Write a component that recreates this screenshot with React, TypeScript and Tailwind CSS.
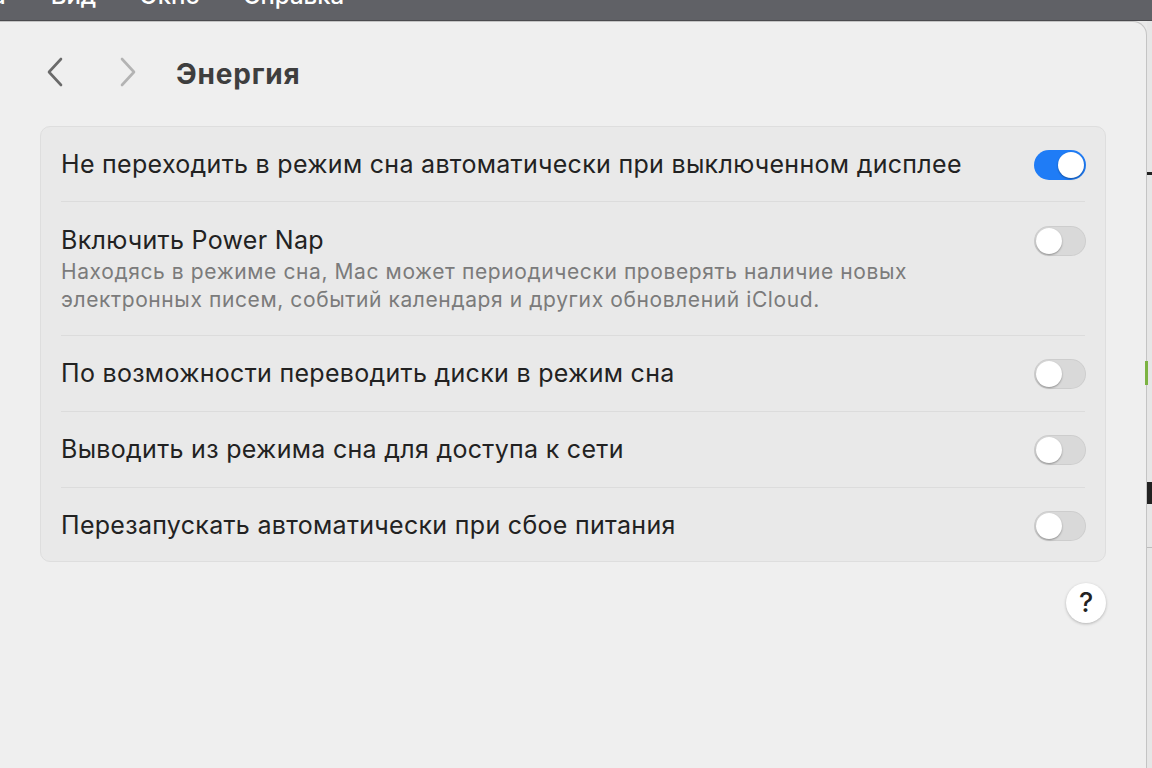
import React from "react";

const Toggle = ({ on }: { on?: boolean }) => {
  return (
    <div
      className={`relative w-[52px] h-[30px] rounded-full shrink-0 ${
        on ? "bg-[#1f7cf6]" : "bg-[#d9d9d9] shadow-[inset_0_0_0_1px_rgba(0,0,0,0.05)]"
      }`}
    >
      <div
        className={`absolute top-[2px] w-[26px] h-[26px] rounded-full bg-white shadow-[0_1px_2px_rgba(0,0,0,0.35)] ${
          on ? "left-[24px]" : "left-[2px]"
        }`}
      />
    </div>
  );
};

const Row = ({
  title,
  desc,
  on,
  first,
  last,
}: {
  title: string;
  desc?: string[];
  on?: boolean;
  first?: boolean;
  last?: boolean;
}) => {
  return (
    <div className={first ? "" : "border-t border-[#dcdcdc]"}>
      <div
        className={`flex justify-between gap-4 ${
          desc
            ? "items-start pt-[23px] pb-[21px]"
            : first
            ? "items-center pt-[22px] pb-[21px]"
            : last
            ? "items-center pt-[22px] pb-[20px]"
            : "items-center py-[22px]"
        }`}
      >
        <div className="flex flex-col">
          <span className="text-[25px] leading-[31px] tracking-[0.3px] text-[#222222]">{title}</span>
          {desc && (
            <div className="mt-[2px] text-[21px] leading-[28px] tracking-[0.6px] text-[#7b7b7b]">
              {desc.map((d) => (
                <div key={d}>{d}</div>
              ))}
            </div>
          )}
        </div>
        <div className={desc ? "pt-[1px] mr-[-1px]" : "mr-[-1px]"}>
          <Toggle on={on} />
        </div>
      </div>
    </div>
  );
};

export default function App() {
  return (
    <div
      className="w-[1152px] h-[768px] overflow-hidden bg-[#e9e9e9] flex flex-col"
      style={{ fontFamily: "Inter, 'Liberation Sans', sans-serif" }}
    >
      {/* menu bar */}
      <div className="h-[21px] bg-[#606166] overflow-hidden shrink-0 border-b border-[#4a4a4e]">
        <div className="flex text-white text-[24px] leading-[24px] mt-[-16px] font-medium">
          <span className="ml-[-8px]">а</span>
          <span className="ml-[45px]">Вид</span>
          <span className="ml-[43px]">Окно</span>
          <span className="ml-[43px]">Справка</span>
        </div>
      </div>

      <div className="flex flex-1">
        {/* window */}
        <div className="w-[1147px] bg-[#efefef] rounded-tr-[14px] border-r border-t border-[#c4c4c4] pl-[40px] pr-[40px] flex flex-col">
          {/* header */}
          <div className="h-[104px] flex items-center pb-[4px]">
            <svg width="20" height="32" viewBox="0 0 20 32" className="ml-[5px]">
              <path d="M16 3 L4 16 L16 29" fill="none" stroke="#6a6a6a" strokeWidth="2.6" strokeLinecap="round" strokeLinejoin="round" />
            </svg>
            <svg width="20" height="32" viewBox="0 0 20 32" className="ml-[53px]">
              <path d="M4 3 L16 16 L4 29" fill="none" stroke="#b3b3b3" strokeWidth="2.6" strokeLinecap="round" strokeLinejoin="round" />
            </svg>
            <span className="ml-[38px] mt-[3px] text-[28px] tracking-[0.8px] font-bold text-[#3e3e3e]">Энергия</span>
          </div>

          {/* card */}
          <div className="rounded-[10px] bg-[#e9e9e9] border border-[#dedede] px-[20px]">
            <Row first on title="Не переходить в режим сна автоматически при выключенном дисплее" />
            <Row
              title="Включить Power Nap"
              desc={[
                "Находясь в режиме сна, Mac может периодически проверять наличие новых",
                "электронных писем, событий календаря и других обновлений iCloud.",
              ]}
            />
            <Row title="По возможности переводить диски в режим сна" />
            <Row title="Выводить из режима сна для доступа к сети" />
            <Row last title="Перезапускать автоматически при сбое питания" />
          </div>

          <div className="flex justify-end mt-[21px]">
            <div className="w-[40px] h-[40px] rounded-full bg-white shadow-[0_1px_3px_rgba(0,0,0,0.25)] flex items-center justify-center text-[27px] font-medium text-[#222222]">
              ?
            </div>
          </div>
        </div>

        {/* desktop strip */}
        <div className="relative flex-1 bg-[#e6e6e6]">
          <div className="absolute left-0 right-0 top-[151px] h-[3px] bg-[#222222]" />
          <div className="absolute left-[-2px] w-[3px] top-[340px] h-[24px] bg-[#7cb342]" />
          <div className="absolute left-0 right-0 top-[461px] h-[22px] bg-[#222222]" />
          <div className="absolute left-0 right-0 top-[526px] h-[1px] bg-[#bdbdbd]" />
        </div>
      </div>
    </div>
  );
}
